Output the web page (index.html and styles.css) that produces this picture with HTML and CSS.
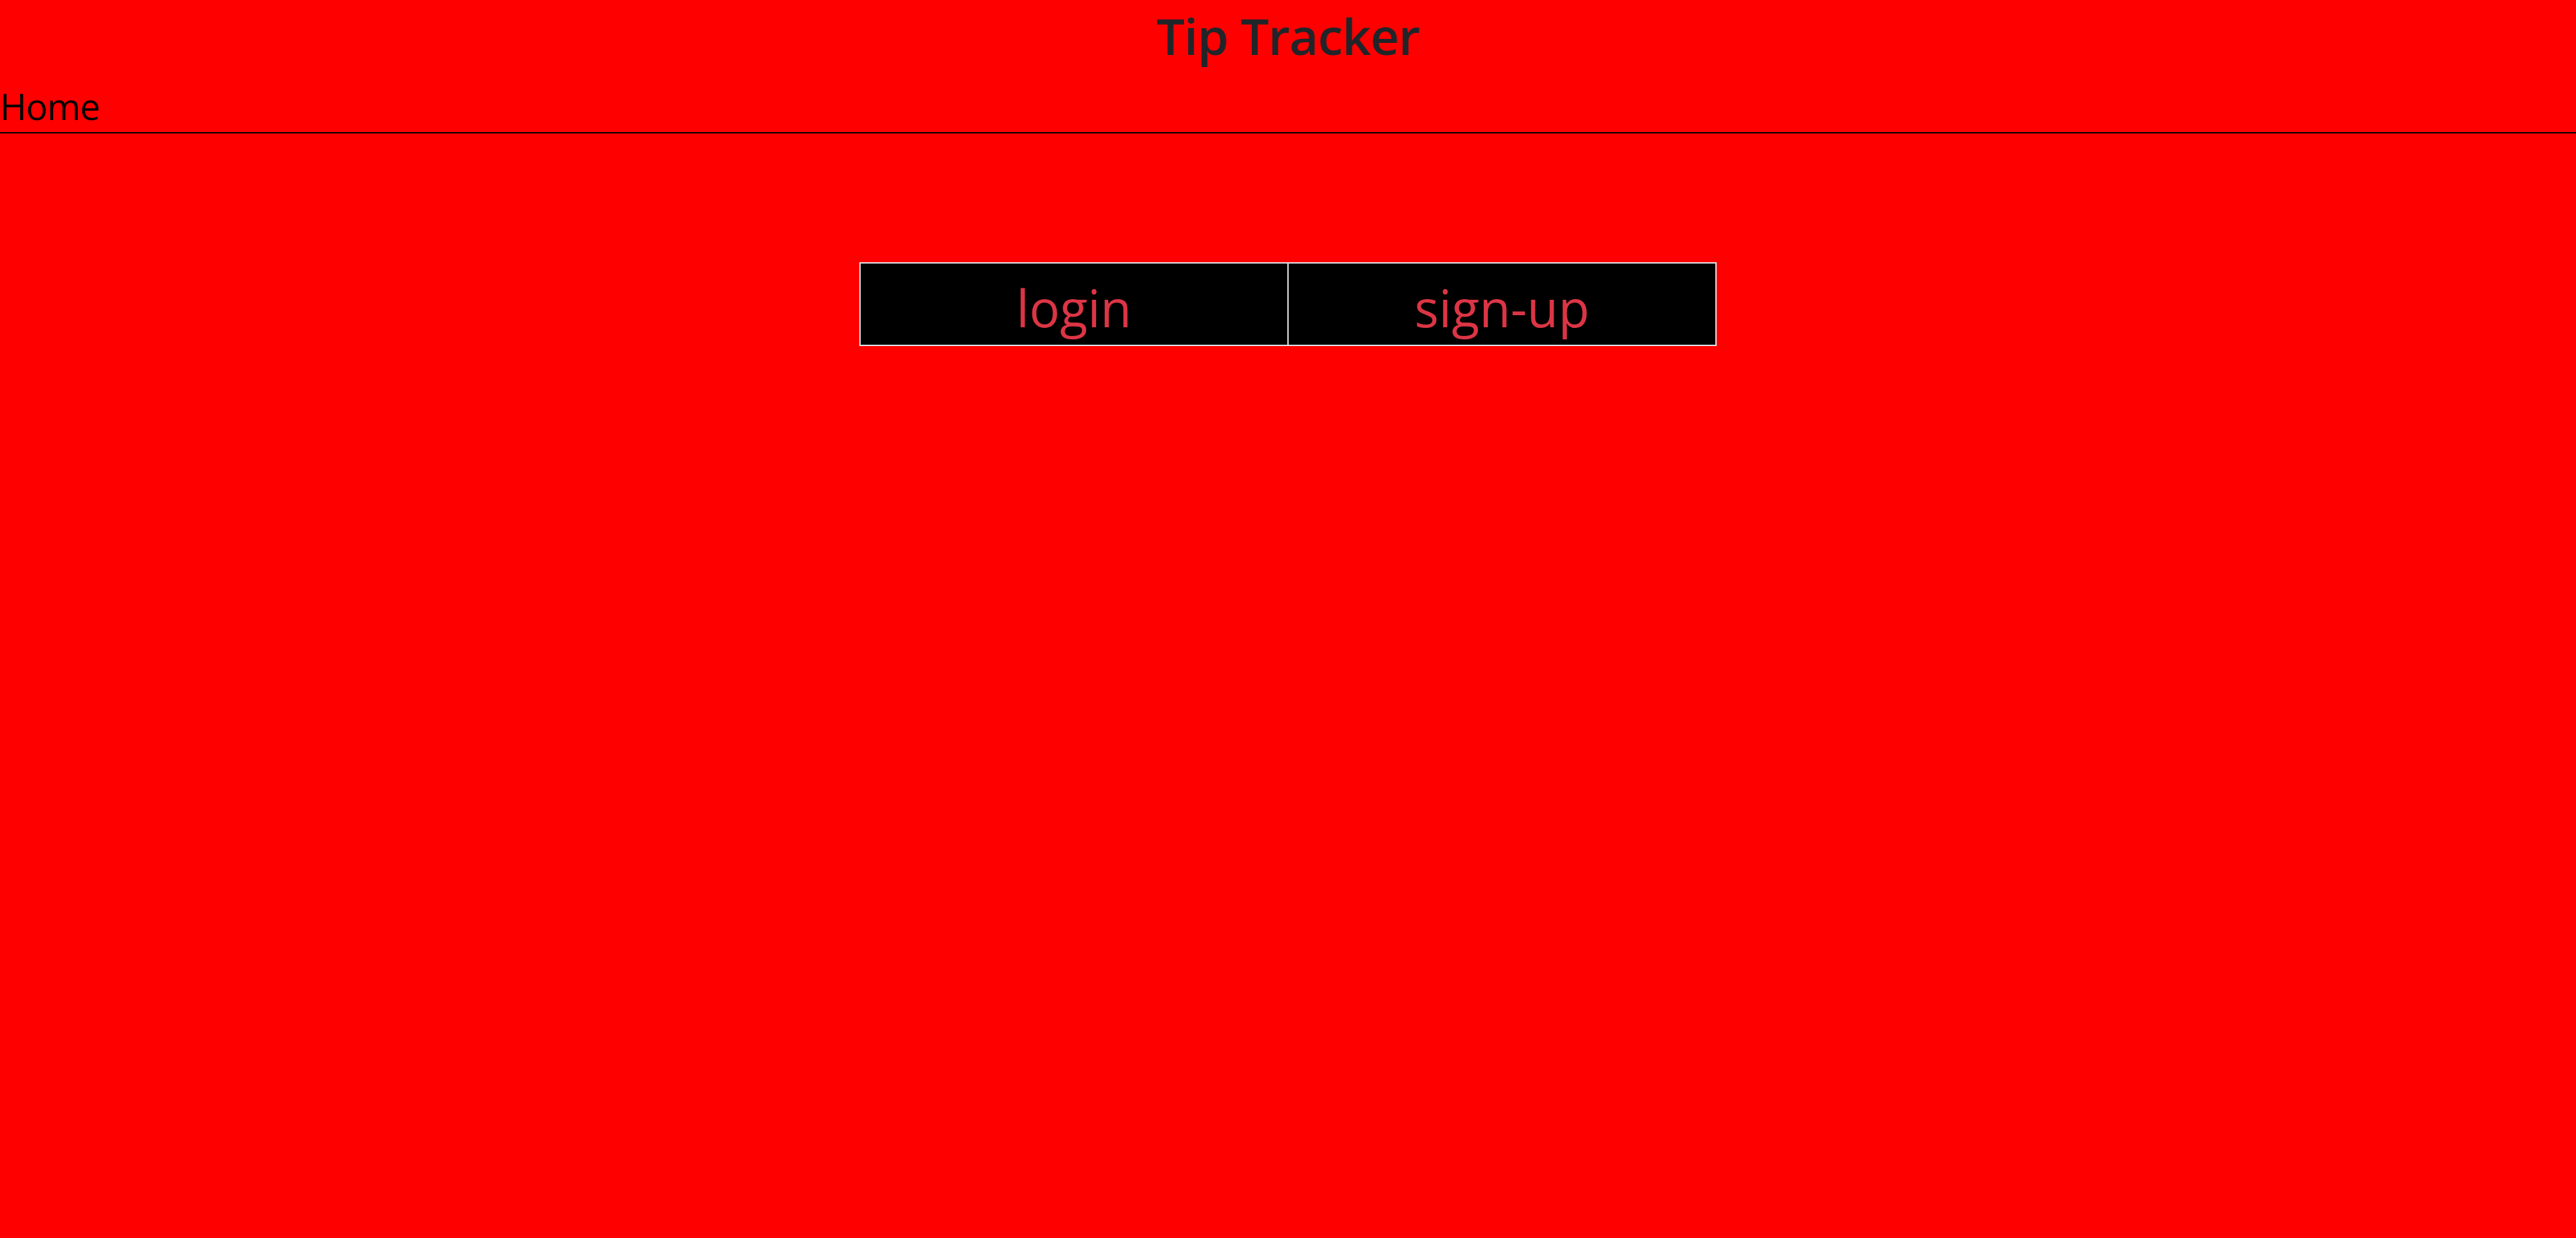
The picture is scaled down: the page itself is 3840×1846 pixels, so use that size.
FILE: index.html
```html
<!DOCTYPE html>
<html lang="en">

<head>
    <meta charset="UTF-8">
    <meta name="viewport" content="width=device-width, initial-scale=1.0">
    <title>Tip Tracker</title>
    <link rel="stylesheet" href="styles.css">
</head>

<body>
    <header class="site-header">
        <h1 class="site-title">Tip Tracker</h1>
        <nav class="site-nav">
            <a class="nav-link" href="#">Home</a>
        </nav>
    </header>
    <main class="content">
        <div class="auth-buttons">
            <button class="auth-button">login</button>
            <button class="auth-button">sign-up</button>
        </div>
    </main>
</body>

</html>
```

FILE: styles.css
```css
body,
html {
    margin: 0;
    padding: 0;
    height: 100%;
    font-family: "Open Sans", "Noto Sans", sans-serif;
    background-color: #ff0000;
}

.site-header {
    padding-top: 5px;
}

.site-title {
    margin: 0;
    text-align: center;
    font-size: 75px;
    font-weight: 600;
    line-height: 96px;
    color: #212529;
    letter-spacing: -1px;
}

.site-nav {
    padding-top: 18px;
    border-bottom: 2px solid #000;
}

.nav-link {
    display: inline-block;
    font-size: 54px;
    line-height: 78px;
    color: #000;
    text-decoration: none;
    letter-spacing: -1px;
}

.content {
    padding-top: 192px;
}

.auth-buttons {
    display: flex;
    justify-content: center;
}

.auth-button {
    width: 640px;
    height: 125px;
    margin: 0;
    padding: 0;
    background: #000;
    border: 2px solid #dee2e6;
    color: #dc3545;
    font-family: "Open Sans", "Noto Sans", sans-serif;
    font-size: 76px;
    font-weight: 400;
    line-height: 1;
    padding-top: 10px;
}

.auth-button + .auth-button {
    margin-left: -2px;
}
```
